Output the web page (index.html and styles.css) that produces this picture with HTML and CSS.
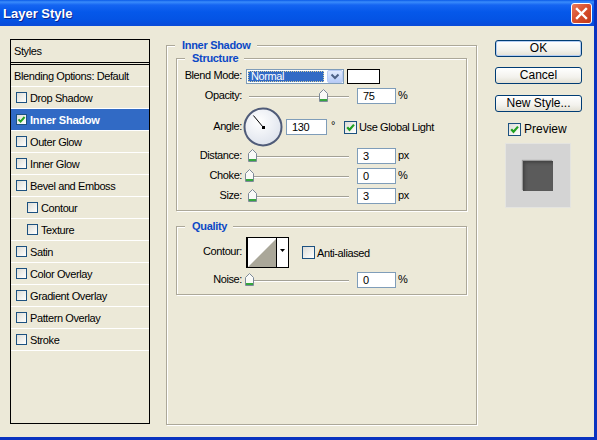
FILE: index.html
```html
<!DOCTYPE html>
<html lang="en">
<head>
    <meta charset="UTF-8">
    <meta name="viewport" content="width=device-width, initial-scale=1.0">
    <title>Layer Style</title>
    <link rel="stylesheet" href="styles.css">
</head>
<body>
    <div class="window">
        <div class="titlebar">
            <span class="title">Layer Style</span>
            <span class="close">
                <svg width="19" height="19" viewBox="0 0 19 19"><path d="M5,5 L14,14 M14,5 L5,14" stroke="#fff" stroke-width="2.4" stroke-linecap="square"/></svg>
            </span>
        </div>

        <div class="client">
            <div class="style-list">
                <div class="list-head">Styles</div>
                <div class="list-item">Blending Options: Default</div>
                <div class="list-item"><span class="check small"></span>Drop Shadow</div>
                <div class="list-item selected"><span class="check small"><svg viewBox="0 0 9 9"><path d="M1.5,4.3 L3.6,6.6 L7.6,2" fill="none" stroke="#21a121" stroke-width="2"/></svg></span>Inner Shadow</div>
                <div class="list-item"><span class="check small"></span>Outer Glow</div>
                <div class="list-item"><span class="check small"></span>Inner Glow</div>
                <div class="list-item"><span class="check small"></span>Bevel and Emboss</div>
                <div class="list-item sub"><span class="check small"></span>Contour</div>
                <div class="list-item sub"><span class="check small"></span>Texture</div>
                <div class="list-item"><span class="check small"></span>Satin</div>
                <div class="list-item"><span class="check small"></span>Color Overlay</div>
                <div class="list-item"><span class="check small"></span>Gradient Overlay</div>
                <div class="list-item"><span class="check small"></span>Pattern Overlay</div>
                <div class="list-item"><span class="check small"></span>Stroke</div>
            </div>

            <div class="group outer">
                <div class="group-title">Inner Shadow</div>

                <div class="group inner structure">
                    <div class="group-title">Structure</div>

                    <div class="row row-blend">
                        <span class="label">Blend Mode:</span>
                        <div class="select">
                            <span class="select-value">Normal</span>
                            <span class="select-btn">
                                <svg width="14" height="11" viewBox="0 0 14 11"><path d="M3.5,3.5 L7,7 L10.5,3.5" fill="none" stroke="#4d6185" stroke-width="2"/></svg>
                            </span>
                        </div>
                        <span class="swatch"></span>
                    </div>

                    <div class="row">
                        <span class="label">Opacity:</span>
                        <div class="slider">
                            <span class="track"></span>
                            <svg class="thumb" style="left: 70px" width="9" height="13" viewBox="0 0 9 13"><path d="M0.5,4.5 L4.5,0.5 L8.5,4.5 L8.5,12.5 L0.5,12.5 Z" fill="#fafaf7" stroke="#7d8a99"/><rect x="1" y="10" width="7" height="2" fill="#35a63f"/></svg>
                        </div>
                        <span class="field">75</span>
                        <span class="unit">%</span>
                    </div>

                    <div class="row row-angle">
                        <span class="label">Angle:</span>
                        <svg class="dial" width="40" height="40" viewBox="0 0 40 40">
                            <defs>
                                <radialGradient id="dialFill" cx="40%" cy="35%" r="70%">
                                    <stop offset="0" stop-color="#ffffff"/>
                                    <stop offset="1" stop-color="#dde2ec"/>
                                </radialGradient>
                            </defs>
                            <circle cx="20" cy="20" r="18.5" fill="url(#dialFill)" stroke="#4f5b78" stroke-width="2"/>
                            <line x1="20" y1="20" x2="10.4" y2="8.5" stroke="#000" stroke-width="1"/>
                            <rect x="19" y="19" width="3" height="3" fill="#000"/>
                        </svg>
                        <span class="field field-angle">130</span>
                        <span class="unit deg">°</span>
                        <span class="check global"><svg viewBox="0 0 11 11"><path d="M2.2,5.2 L4.5,7.8 L9,2.6" fill="none" stroke="#21a121" stroke-width="2.2"/></svg></span>
                        <span class="check-label">Use Global Light</span>
                    </div>

                    <div class="row row-first">
                        <span class="label">Distance:</span>
                        <div class="slider">
                            <span class="track"></span>
                            <svg class="thumb" style="left: -1px" width="9" height="13" viewBox="0 0 9 13"><path d="M0.5,4.5 L4.5,0.5 L8.5,4.5 L8.5,12.5 L0.5,12.5 Z" fill="#fafaf7" stroke="#7d8a99"/><rect x="1" y="10" width="7" height="2" fill="#35a63f"/></svg>
                        </div>
                        <span class="field">3</span>
                        <span class="unit">px</span>
                    </div>

                    <div class="row">
                        <span class="label">Choke:</span>
                        <div class="slider">
                            <span class="track"></span>
                            <svg class="thumb" style="left: -4px" width="9" height="13" viewBox="0 0 9 13"><path d="M0.5,4.5 L4.5,0.5 L8.5,4.5 L8.5,12.5 L0.5,12.5 Z" fill="#fafaf7" stroke="#7d8a99"/><rect x="1" y="10" width="7" height="2" fill="#35a63f"/></svg>
                        </div>
                        <span class="field">0</span>
                        <span class="unit">%</span>
                    </div>

                    <div class="row">
                        <span class="label">Size:</span>
                        <div class="slider">
                            <span class="track"></span>
                            <svg class="thumb" style="left: -1px" width="9" height="13" viewBox="0 0 9 13"><path d="M0.5,4.5 L4.5,0.5 L8.5,4.5 L8.5,12.5 L0.5,12.5 Z" fill="#fafaf7" stroke="#7d8a99"/><rect x="1" y="10" width="7" height="2" fill="#35a63f"/></svg>
                        </div>
                        <span class="field">3</span>
                        <span class="unit">px</span>
                    </div>
                </div>

                <div class="group inner quality">
                    <div class="group-title">Quality</div>

                    <div class="row row-contour">
                        <span class="label">Contour:</span>
                        <svg class="contour" width="43" height="31" viewBox="0 0 43 31">
                            <rect x="0.5" y="0.5" width="42" height="30" fill="#fff" stroke="#000"/>
                            <line x1="1.5" y1="1" x2="1.5" y2="30" stroke="#000"/>
                            <polygon points="2,30 30,2 30,30" fill="#aaa799"/>
                            <line x1="30.5" y1="1" x2="30.5" y2="30" stroke="#000"/>
                            <polygon points="34,12 39,12 36.5,15" fill="#000"/>
                        </svg>
                        <span class="check anti"></span>
                        <span class="check-label">Anti-aliased</span>
                    </div>

                    <div class="row">
                        <span class="label">Noise:</span>
                        <div class="slider">
                            <span class="track"></span>
                            <svg class="thumb" style="left: -4px" width="9" height="13" viewBox="0 0 9 13"><path d="M0.5,4.5 L4.5,0.5 L8.5,4.5 L8.5,12.5 L0.5,12.5 Z" fill="#fafaf7" stroke="#7d8a99"/><rect x="1" y="10" width="7" height="2" fill="#35a63f"/></svg>
                        </div>
                        <span class="field">0</span>
                        <span class="unit">%</span>
                    </div>
                </div>
            </div>

            <div class="side">
                <div class="button default">OK</div>
                <div class="button">Cancel</div>
                <div class="button">New Style...</div>
                <div class="preview-toggle">
                    <span class="check"><svg viewBox="0 0 11 11"><path d="M2.2,5.2 L4.5,7.8 L9,2.6" fill="none" stroke="#21a121" stroke-width="2.2"/></svg></span>
                    <span class="check-label">Preview</span>
                </div>
                <div class="preview">
                    <div class="preview-square"></div>
                </div>
            </div>
        </div>
    </div>
</body>
</html>
```

FILE: styles.css
```css
* {
    margin: 0;
    padding: 0;
    box-sizing: border-box;
}

body {
    width: 597px;
    height: 440px;
    overflow: hidden;
    font-family: "Liberation Sans", Arial, sans-serif;
    font-size: 11px;
    letter-spacing: -0.4px;
    color: #000;
    background-color: #ece9d8;
}

.window {
    width: 597px;
    height: 440px;
    display: flex;
    flex-direction: column;
    background-color: #ece9d8;
    border-right: 3px solid #0a33c0;
    border-bottom: 3px solid #0a33c0;
}

/* title bar */

.titlebar {
    flex: none;
    height: 26px;
    display: flex;
    align-items: center;
    justify-content: space-between;
    padding: 0 2px 0 3px;
    background: linear-gradient(#0a5ae8 0, #3a8cfb 2px, #1565f2 5px, #0558ea 12px, #0453e4 20px, #0a4bd8 26px);
}

.title {
    font-size: 13px;
    font-weight: bold;
    letter-spacing: 0;
    color: #fff;
    text-shadow: 1px 1px #0c2590;
}

.close {
    width: 21px;
    height: 21px;
    display: flex;
    align-items: center;
    justify-content: center;
    border: 1px solid #fff;
    border-radius: 3px;
    background: linear-gradient(135deg, #e97a5c 0%, #d9512f 45%, #c2391a 100%);
}

/* client area */

.client {
    flex: 1;
    display: flex;
    align-items: flex-start;
    padding: 13px 0 0 10px;
}

.style-list {
    flex: none;
    width: 140px;
    height: 385px;
    border: 1px solid #000;
}

.list-head {
    height: 25px;
    line-height: 22px;
    padding-left: 3px;
    border-bottom: 3px double #000;
}

.list-item {
    height: 22px;
    display: flex;
    align-items: center;
    padding-left: 3px;
    border-bottom: 1px solid #fff;
}

.list-item .check {
    margin-left: 2px;
    margin-right: 3px;
}

.list-item.sub {
    padding-left: 14px;
}

.list-item.selected {
    background-color: #316ac5;
    color: #fff;
    font-weight: bold;
    letter-spacing: -0.2px;
}

/* checkboxes */

.check {
    flex: none;
    width: 13px;
    height: 13px;
    display: flex;
    border: 1px solid #1c5180;
    background: linear-gradient(135deg, #dcdcd7 0%, #f2f2ef 60%, #fff 100%);
}

.check.small {
    width: 11px;
    height: 11px;
}

.check svg {
    width: 100%;
    height: 100%;
}

.check-label {
    margin-left: 2px;
}

/* group boxes */

.group {
    border: 1px solid #aca899;
    box-shadow: inset 1px 1px #fff, 1px 1px #fff;
}

.group-title {
    width: fit-content;
    height: 14px;
    line-height: 14px;
    margin: -8px 0 0 8px;
    padding: 0 6px 0 7px;
    background-color: #ece9d8;
    color: #0b48c6;
    font-weight: bold;
    letter-spacing: -0.3px;
}

.outer {
    flex: none;
    width: 311px;
    height: 380px;
    margin: 6px 0 0 16px;
}

.inner {
    margin: 6px 9px 0 9px;
    padding-bottom: 6px;
}

.quality {
    margin-top: 15px;
}

/* rows of controls */

.row {
    display: flex;
    align-items: center;
    height: 16px;
    margin-top: 4px;
}

.row-blend {
    height: 15px;
}

.row-angle {
    height: 40px;
    margin-top: 3px;
}

.row-first {
    margin-top: 1px;
}

.row-contour {
    height: 31px;
}

.label {
    flex: none;
    width: 65px;
    margin-right: 4px;
    margin-bottom: 3px;
    text-align: right;
}

.unit {
    margin-left: 2px;
    margin-bottom: 3px;
}

.deg {
    margin-left: 4px;
    margin-bottom: 4px;
}

.select {
    flex: none;
    width: 98px;
    height: 15px;
    display: flex;
    padding-left: 1px;
    border: 1px solid #7f9db9;
    background-color: #fff;
}

.select-value {
    flex: none;
    width: 76px;
    height: 11px;
    margin-top: 1px;
    padding-left: 2px;
    line-height: 9px;
    color: #fff;
    background-color: #316ac5;
    border: 1px dotted #d8d0a0;
}

.select-btn {
    flex: none;
    width: 16px;
    height: 13px;
    margin-left: auto;
    display: flex;
    align-items: center;
    justify-content: center;
    border: 1px solid #b9cbf3;
    border-radius: 2px;
    background: linear-gradient(#e1eafd, #b8ccf8);
}

.swatch {
    flex: none;
    width: 33px;
    height: 15px;
    margin-left: 3px;
    border: 1px solid #000;
    background-color: #fff;
}

.slider {
    flex: none;
    position: relative;
    width: 100px;
    height: 16px;
    margin-left: 3px;
}

.track {
    position: absolute;
    left: 0;
    right: 0;
    top: 8px;
    height: 2px;
    border-top: 1px solid #a3a196;
    border-bottom: 1px solid #fff;
}

.thumb {
    position: absolute;
    top: 1px;
}

.field {
    flex: none;
    width: 39px;
    height: 16px;
    margin-left: 8px;
    padding-left: 5px;
    line-height: 15px;
    border: 1px solid #7f9db9;
    background-color: #fff;
}

.field-angle {
    width: 41px;
    margin-left: 3px;
}

.dial {
    flex: none;
    margin-left: -3px;
}

.global {
    margin-left: 9px;
}

.contour {
    flex: none;
}

.anti {
    margin-left: 13px;
}

/* right column */

.side {
    flex: none;
    width: 87px;
    margin: 1px 0 0 18px;
    display: flex;
    flex-direction: column;
    font-size: 12px;
    letter-spacing: 0;
}

.button {
    height: 17px;
    line-height: 15px;
    text-align: center;
    border: 1px solid #003c74;
    border-radius: 3px;
    background: linear-gradient(#ffffff 0%, #f3f2ed 60%, #e3e0d4 100%);
    margin-top: 10px;
}

.button.default {
    margin-top: 0;
    box-shadow: inset 0 0 0 1px #b4cdf3;
}

.button + .button + .button {
    margin-top: 11px;
}

.preview-toggle {
    display: flex;
    align-items: center;
    height: 14px;
    margin: 10px 0 0 13px;
}

.preview-toggle .check-label {
    margin-left: 3px;
}

.preview {
    width: 66px;
    height: 65px;
    margin: 7px 0 0 10px;
    display: flex;
    align-items: center;
    justify-content: center;
    background-color: #d4d4d4;
    border: 1px solid #e4e4e0;
}

.preview-square {
    width: 30px;
    height: 30px;
    background-color: #5b5b5b;
    box-shadow: inset 2px 2px 3px #444, -1px -1px 1px #9a9a9a;
}
```
